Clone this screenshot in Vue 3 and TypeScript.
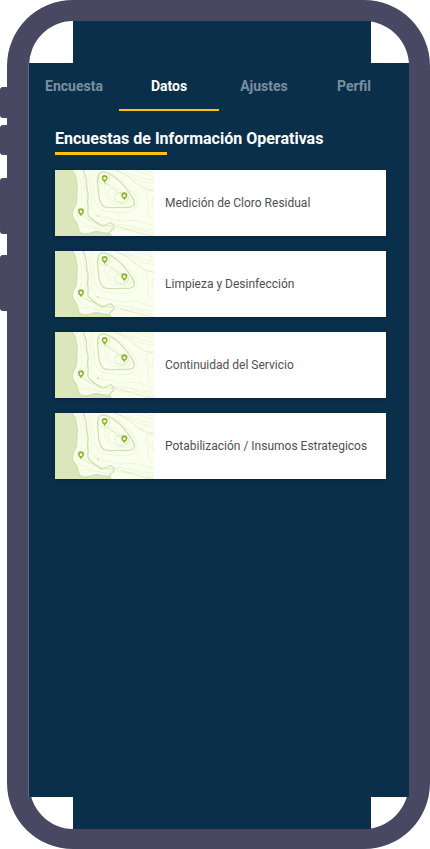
<script setup lang="ts">
import { ref } from 'vue'

const tabs: string[] = ['Encuesta', 'Datos', 'Ajustes', 'Perfil']
const active = ref('Datos')

const surveys: string[] = [
  'Medición de Cloro Residual',
  'Limpieza y Desinfección',
  'Continuidad del Servicio',
  'Potabilización / Insumos Estrategicos',
]

const pins = [
  { x: 161, y: 50 },
  { x: 220, y: 102 },
  { x: 90, y: 150 },
]
</script>

<template>
  <div class="device">
    <div class="keys" aria-hidden="true">
      <span class="key key-switch"></span>
      <span class="key key-small"></span>
      <span class="key key-up"></span>
      <span class="key key-down"></span>
    </div>
    <div class="frame">
      <div class="cap cap-top"></div>
      <main class="screen">
        <nav class="tabs">
          <button
            v-for="tab in tabs"
            :key="tab"
            type="button"
            class="tab"
            :class="{ active: tab === active }"
            @click="active = tab"
          >
            {{ tab }}
          </button>
        </nav>
        <section class="content">
          <h1 class="title">Encuestas de Información Operativas</h1>
          <ul class="list">
            <li v-for="survey in surveys" :key="survey">
              <button type="button" class="card">
                <svg class="map" viewBox="12 15 297 198" preserveAspectRatio="xMidYMid slice" aria-hidden="true">
                  <rect x="12" y="15" width="297" height="198" fill="#f9ffec" />
                  <path
                    d="M12 15H64C68 25 75 27 75 38C74 49 80 54 79 65C77 75 79 84 77 94C77 105 78 113 74 121C67 130 64 139 64 151C66 162 74 168 77 175C82 184 80 197 87 203C97 209 114 207 124 202C139 197 150 203 161 204C171 207 178 201 180 213H12Z"
                    fill="#dbe6bb"
                  />
                  <g fill="none" stroke="#e8f0d4" stroke-width="2">
                    <path d="M76 15C79 27 89 33 87 47C92 62 91 77 91 91C96 103 91 117 86 126C79 137 77 151 83 162C93 180 119 181 132 186C151 191 165 200 182 190C196 184 211 199 239 193C263 189 280 203 309 204" />
                    <path d="M91 15C91 28 101 36 98 52C102 65 101 80 104 94C110 112 101 130 99 143C100 154 112 164 121 171C137 181 148 179 159 186C174 191 184 178 200 178C228 178 258 193 309 195" />
                    <path d="M118 15C119 28 111 38 115 52C122 70 117 86 123 104C122 126 120 132 132 147C144 163 174 155 193 165C219 175 249 157 276 173L309 181" />
                    <path d="M128 15C126 30 120 42 126 61C132 78 126 98 134 115C144 129 154 140 171 139C200 142 225 147 244 137C263 127 264 108 253 92C240 76 226 59 214 47C199 34 184 27 163 20" />
                    <path d="M164 60C177 53 190 64 204 74C219 84 240 97 239 110C236 121 218 118 203 117C188 120 176 115 171 103C165 89 157 74 164 60Z" />
                    <path d="M175 72C188 65 199 80 214 85C228 91 232 101 229 108C215 114 192 112 181 104C174 94 169 81 175 72Z" />
                    <path d="M196 15C216 28 231 24 247 36C264 49 285 51 309 56M221 15C237 30 260 31 279 41L309 45M252 15C267 25 287 26 309 35M276 15L309 24" />
                    <path d="M309 73C288 73 281 89 290 105C298 120 285 134 292 151L309 163M309 93C302 105 301 119 309 133M80 189C102 181 124 190 146 194" />
                  </g>
                  <g fill="none" stroke="#d3e0b0" stroke-width="4">
                    <path d="M64 15C68 25 75 27 75 38C74 49 80 54 79 65C77 75 79 84 77 94C77 105 78 113 74 121C67 130 64 139 64 151C66 162 74 168 77 175C82 184 80 197 87 203C97 209 114 207 124 202C139 197 150 203 161 204C171 207 178 201 180 213" />
                    <path d="M98 15C98 26 107 35 106 48C107 58 105 69 110 80C114 94 107 109 111 121C113 131 108 143 112 151C120 162 137 173 148 181C160 188 169 172 181 174C190 178 187 183 188 190C178 199 170 205 166 213" />
                    <path d="M149 22C159 17 174 25 190 36C205 46 224 66 236 85C245 98 253 108 249 120C242 132 221 126 201 127C185 127 171 131 159 125C146 118 145 99 142 87C145 73 137 57 140 42C141 34 143 25 149 22Z" />
                  </g>
                  <g fill="none" stroke="#bfd190" stroke-width="2" stroke-dasharray="4 3">
                    <path d="M94 153C112 165 134 170 151 178C170 187 188 178 207 187C236 194 266 207 309 212" />
                    <path d="M192 15C213 25 230 32 244 44C257 57 270 66 284 72C294 76 302 77 309 80" />
                    <path d="M145 33C136 45 144 58 157 57C177 58 181 39 171 28M194 88C207 80 229 81 234 96C232 112 213 117 201 111C190 105 190 95 194 88Z" />
                    <path d="M161 53C180 66 202 77 220 103" />
                  </g>
                  <circle cx="141" cy="153" r="3" fill="#d3dfb6" />
                  <g v-for="pin in pins" :key="pin.x" :transform="`translate(${pin.x} ${pin.y})`">
                    <path d="M0 4C-4 -3 -9 -5 -9 -11A9 9 0 0 1 9 -11C9 -5 4 -3 0 4Z" fill="#8fb52f" />
                    <circle cy="-10" r="4" fill="#f9ffec" />
                  </g>
                </svg>
                <span class="label">{{ survey }}</span>
              </button>
            </li>
          </ul>
        </section>
      </main>
      <div class="cap cap-bottom"></div>
    </div>
  </div>
</template>

<style>
body {
  margin: 0;
  background: #fff;
}
</style>

<style scoped>
.device {
  display: flex;
  min-height: 100vh;
  font-family: Roboto, 'Liberation Sans', sans-serif;
}

.keys {
  flex: none;
  width: 7px;
  padding-top: 87px;
}

.key {
  display: block;
  border-radius: 3px 0 0 3px;
  background: #494863;
}

.key-switch {
  height: 31px;
  margin-bottom: 7px;
}

.key-small {
  height: 30px;
  margin-bottom: 23px;
}

.key-up {
  height: 56px;
  margin-bottom: 21px;
}

.key-down {
  height: 56px;
}

.frame {
  flex: 1;
  min-width: 0;
  box-sizing: border-box;
  display: flex;
  flex-direction: column;
  border: 21px solid #494863;
  border-left-width: 22px;
  border-bottom-width: 20px;
  border-radius: 66px;
  background: #fff;
}

.cap {
  flex: none;
  margin: 0 38px 0 44px;
  background: #0a2f4b;
}

.cap-top {
  height: 42px;
}

.cap-bottom {
  height: 32px;
}

.screen {
  flex: 1;
  background: #0a2f4b;
  box-shadow: -1px 0 0 #69657e;
}

.tabs {
  display: grid;
  grid-template-columns: 9fr 10fr 9fr 9fr;
  padding-right: 10px;
}

.tab {
  height: 48px;
  padding: 0;
  border: 0;
  border-bottom: 2px solid transparent;
  background: none;
  color: #798f9f;
  font: 700 14px/20px Roboto, 'Liberation Sans', sans-serif;
  cursor: pointer;
}

.tab.active {
  border-bottom-color: #ffc20e;
  color: #fff;
}

.content {
  padding: 16px 23px 24px 26px;
}

.title {
  margin: 0;
  color: #fff;
  font-size: 16px;
  font-weight: 700;
  line-height: 24px;
}

.title::after {
  content: '';
  display: block;
  width: 112px;
  height: 3px;
  margin-top: 1px;
  background: #ffc20e;
}

.list {
  display: grid;
  gap: 15px;
  margin: 15px 0 0;
  padding: 0;
  list-style: none;
}

.card {
  display: flex;
  align-items: center;
  gap: 11px;
  width: 100%;
  height: 66px;
  padding: 0;
  border: 0;
  background: #fff;
  box-shadow: 0 1px 4px rgba(0, 0, 0, 0.3);
  color: #4f4f4f;
  font: 400 12px/16px Roboto, 'Liberation Sans', sans-serif;
  text-align: left;
  cursor: pointer;
}

.map {
  flex: none;
  width: 99px;
  height: 66px;
}
</style>
